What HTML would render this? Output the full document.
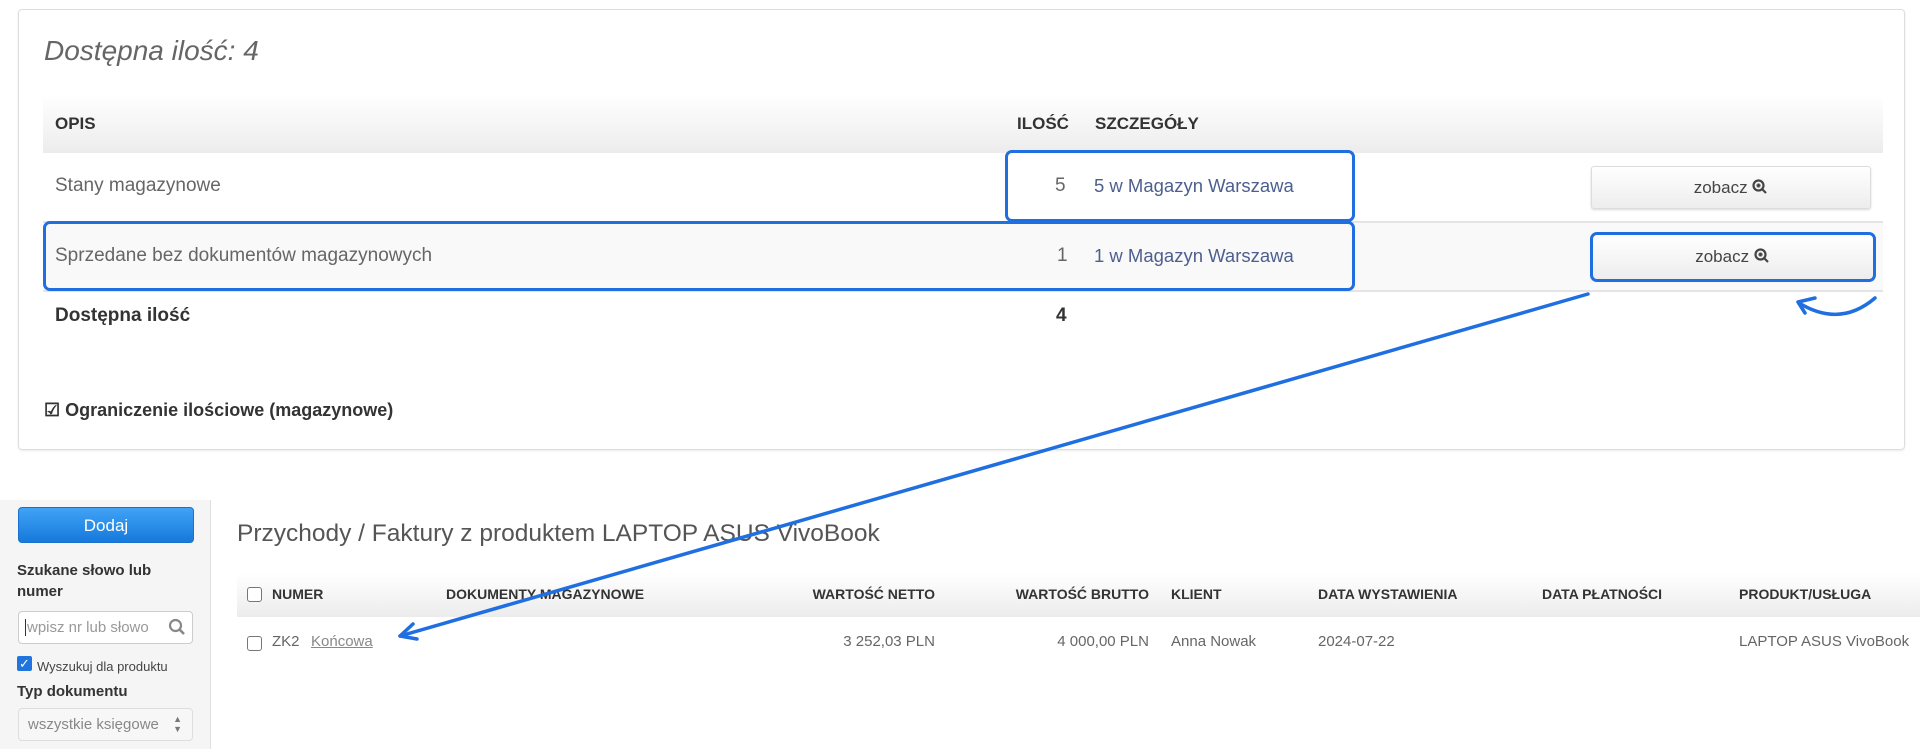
<!DOCTYPE html>
<html><head><meta charset="utf-8"><style>
*{box-sizing:border-box;margin:0;padding:0}
body{width:1920px;height:749px;background:#fff;font-family:"Liberation Sans",Arial,sans-serif;position:relative;overflow:hidden;color:#555}
.abs{position:absolute}
.card{left:18px;top:9px;width:1887px;height:441px;border:1px solid #ddd;border-radius:4px;box-shadow:0 1px 2px rgba(0,0,0,.08)}
.hdr{background:linear-gradient(#fff,#ececec);}
.th{font-weight:bold;color:#333;font-size:17px;line-height:20px}
.td{font-size:19px;line-height:22px;color:#666}
.btn{border:1px solid #ddd;border-radius:3px;background:linear-gradient(#fff,#ededed);box-shadow:0 1px 2px rgba(0,0,0,.15);text-align:center;font-size:17px;color:#444}
.hl{border:3px solid #1f6fe0;border-radius:7px}
.sm{font-size:15px;color:#666;line-height:18px}
.sth{font-size:14px;font-weight:bold;color:#333;line-height:18px}
.cb{width:15px;height:15px;border:1.5px solid #777;border-radius:3px;background:#fff}
</style></head><body>
<div class="abs card"></div>
<div class="abs" style="left:44px;top:35px;font-size:28px;font-style:italic;color:#666">Dostępna ilość: 4</div>
<div class="abs hdr" style="left:43px;top:95px;width:1840px;height:58px"></div>
<div class="abs th" style="left:55px;top:114px">OPIS</div>
<div class="abs th" style="left:1017px;top:114px">ILOŚĆ</div>
<div class="abs th" style="left:1095px;top:114px">SZCZEGÓŁY</div>
<div class="abs" style="left:43px;top:221px;width:1840px;height:71px;background:#f9f9f9;border-top:2px solid #e4e4e4;border-bottom:2px solid #e4e4e4"></div>
<div class="abs td" style="left:55px;top:175px">Stany magazynowe</div>
<div class="abs td" style="left:1055px;top:175px">5</div>
<div class="abs td" style="left:1094px;top:175px;color:#4d5f8f;font-size:18.5px">5 w Magazyn Warszawa</div>
<div class="abs btn" style="left:1591px;top:166px;width:280px;height:43px;line-height:41px">zobacz <svg width="16" height="16" viewBox="0 0 16 16" style="vertical-align:-2px"><circle cx="6.5" cy="6.5" r="5" fill="none" stroke="#444" stroke-width="2.2"/><path d="M10 10l4 4M4.5 6.5h4M6.5 4.5v4" stroke="#444" stroke-width="2.2"/></svg></div>
<div class="abs td" style="left:55px;top:245px">Sprzedane bez dokumentów magazynowych</div>
<div class="abs td" style="left:1057px;top:245px">1</div>
<div class="abs td" style="left:1094px;top:245px;color:#4d5f8f;font-size:18.5px">1 w Magazyn Warszawa</div>
<div class="abs btn" style="left:1591px;top:234px;width:283px;height:46px;line-height:44px">zobacz <svg width="16" height="16" viewBox="0 0 16 16" style="vertical-align:-2px"><circle cx="6.5" cy="6.5" r="5" fill="none" stroke="#444" stroke-width="2.2"/><path d="M10 10l4 4M4.5 6.5h4M6.5 4.5v4" stroke="#444" stroke-width="2.2"/></svg></div>
<div class="abs" style="left:55px;top:305px;font-size:19px;font-weight:bold;color:#333">Dostępna ilość</div>
<div class="abs" style="left:1056px;top:305px;font-size:19px;font-weight:bold;color:#333">4</div>
<div class="abs" style="left:44px;top:400px;font-size:18px;font-weight:bold;color:#333">☑ Ograniczenie ilościowe (magazynowe)</div>
<div class="abs hl" style="left:1005px;top:150px;width:350px;height:72px"></div>
<div class="abs hl" style="left:43px;top:221px;width:1312px;height:70px"></div>
<div class="abs hl" style="left:1590px;top:232px;width:286px;height:50px"></div>

<div class="abs" style="left:0;top:500px;width:211px;height:249px;background:#f5f5f5;border-right:1px solid #e0e0e0"></div>
<div class="abs" style="left:18px;top:507px;width:176px;height:36px;border-radius:4px;background:linear-gradient(#40a3f5,#1679dc);color:#fff;text-align:center;line-height:36px;font-size:17px;border:1px solid #1a72cf">Dodaj</div>
<div class="abs sth" style="left:17px;top:560px;font-size:15px;line-height:21px">Szukane słowo lub<br>numer</div>
<div class="abs" style="left:18px;top:611px;width:175px;height:33px;background:#fff;border:1px solid #ccc;border-radius:4px"></div>
<div class="abs" style="left:25px;top:619px;font-size:15px;color:#999;border-left:1px solid #333;padding-left:1px">wpisz nr lub słowo</div>
<svg class="abs" style="left:168px;top:618px" width="18" height="18" viewBox="0 0 18 18"><circle cx="7.5" cy="7.5" r="5.5" fill="none" stroke="#888" stroke-width="2.2"/><path d="M11.5 11.5l4.5 4.5" stroke="#888" stroke-width="2.6"/></svg>
<div class="abs" style="left:17px;top:656px;width:15px;height:15px;background:#1f74de;border-radius:2px;color:#fff;font-size:13px;line-height:15px;text-align:center">✓</div>
<div class="abs" style="left:37px;top:659px;font-size:13px;color:#444">Wyszukuj dla produktu</div>
<div class="abs sth" style="left:17px;top:683px;font-size:15px">Typ dokumentu</div>
<div class="abs" style="left:18px;top:708px;width:175px;height:33px;background:#f7f7f7;border:1px solid #ddd;border-radius:4px;font-size:15px;color:#888;padding:7px 9px">wszystkie księgowe<span style="position:absolute;right:10px;top:5px;font-size:9px;line-height:10px;color:#777">▲<br>▼</span></div>

<div class="abs" style="left:237px;top:520px;font-size:24.5px;color:#555">Przychody / Faktury z produktem LAPTOP ASUS VivoBook</div>
<div class="abs hdr" style="left:237px;top:573px;width:1683px;height:44px"></div>
<div class="abs cb" style="left:247px;top:587px"></div>
<div class="abs sth" style="left:272px;top:585px">NUMER</div>
<div class="abs sth" style="left:446px;top:585px">DOKUMENTY MAGAZYNOWE</div>
<div class="abs sth" style="left:780px;width:155px;text-align:right;top:585px">WARTOŚĆ NETTO</div>
<div class="abs sth" style="left:990px;width:159px;text-align:right;top:585px">WARTOŚĆ BRUTTO</div>
<div class="abs sth" style="left:1171px;top:585px">KLIENT</div>
<div class="abs sth" style="left:1318px;top:585px">DATA WYSTAWIENIA</div>
<div class="abs sth" style="left:1542px;top:585px">DATA PŁATNOŚCI</div>
<div class="abs sth" style="left:1739px;top:585px">PRODUKT/USŁUGA</div>
<div class="abs cb" style="left:247px;top:636px"></div>
<div class="abs sm" style="left:272px;top:633px">ZK2</div>
<div class="abs sm" style="left:311px;top:633px;text-decoration:underline;color:#888">Końcowa</div>
<div class="abs sm" style="left:780px;width:155px;text-align:right;top:633px">3 252,03 PLN</div>
<div class="abs sm" style="left:990px;width:159px;text-align:right;top:633px">4 000,00 PLN</div>
<div class="abs sm" style="left:1171px;top:633px">Anna Nowak</div>
<div class="abs sm" style="left:1318px;top:633px">2024-07-22</div>
<div class="abs sm" style="left:1739px;top:633px">LAPTOP ASUS VivoBook</div>

<svg class="abs" style="left:0;top:0" width="1920" height="749">
<g stroke="#1f6fe0" stroke-width="3.5" fill="none" stroke-linecap="round" stroke-linejoin="round">
<path d="M1588 294 L400 636"/>
<path d="M400 636 L413 624 M400 636 L417 639"/>
<path d="M1875 298 Q1840 328 1799 303"/>
<path d="M1815 298 L1798 302 L1805 313"/>
</g></svg>
</body></html>
